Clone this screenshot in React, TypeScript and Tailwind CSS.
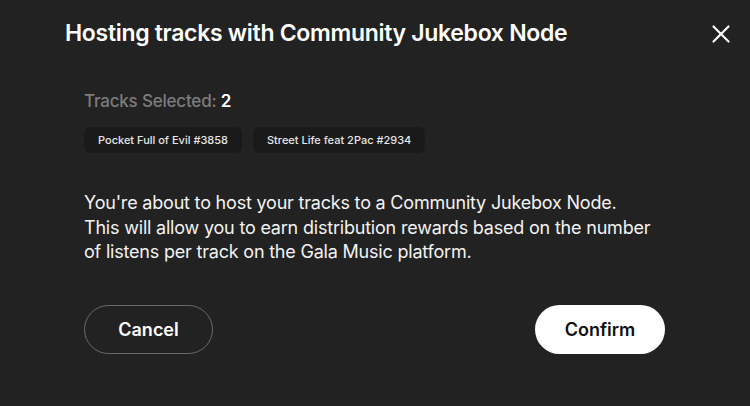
import { X } from "lucide-react";

const tracks = ["Pocket Full of Evil #3858", "Street Life feat 2Pac #2934"];

export default function App() {
  return (
    <div className="w-[750px] h-[406px] bg-[#222222] text-white font-['Inter',sans-serif] overflow-hidden">
      <div className="flex items-start justify-between pl-[65px] pr-[14px] pt-[18px] h-[90px]">
        <h1 className="text-[23px] leading-[30px] font-semibold tracking-[-0.3px]">
          Hosting tracks with Community Jukebox Node
        </h1>
        <button className="text-white mt-[1px]">
          <X size={30} strokeWidth={1.7} />
        </button>
      </div>

      <div className="pl-[84px] pr-[85px]">
        <div className="text-[17px] leading-[22px] text-[#7c7c7c] font-medium tracking-[-0.2px]">
          Tracks Selected: <span className="text-white font-semibold">2</span>
        </div>
        <div className="flex gap-[11px] mt-[15px]">
          {tracks.map((t) => (
            <span key={t} className="bg-[#1a1a1a] rounded-[7px] h-[26px] px-[14px] flex items-center text-[11px] font-medium text-[#e6e6e6]">
              {t}
            </span>
          ))}
        </div>

        <p className="mt-[38px] text-[18px] leading-[24.5px] text-[#f2f2f2] tracking-[-0.2px]">
          You're about to host your tracks to a Community Jukebox Node.
          <br />
          This will allow you to earn distribution rewards based on the number
          <br />
          of listens per track on the Gala Music platform.
        </p>

        <div className="flex justify-between mt-[40px]">
          <button className="h-[49px] w-[129px] rounded-full border border-[#6a6a6a] text-[18px] font-semibold">
            Cancel
          </button>
          <button className="h-[49px] w-[130px] rounded-full bg-white text-[#111] text-[18px] font-semibold">
            Confirm
          </button>
        </div>
      </div>
    </div>
  );
}
